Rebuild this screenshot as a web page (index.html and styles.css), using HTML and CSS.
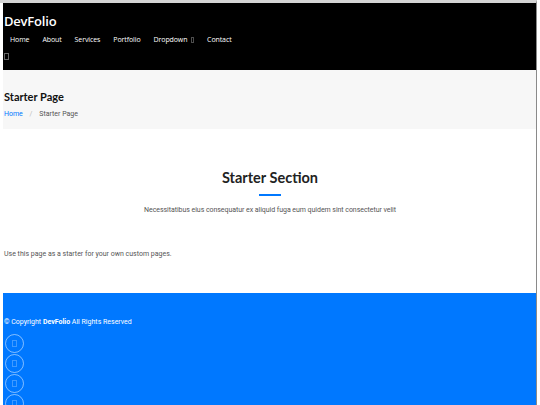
FILE: index.html
```html
<!DOCTYPE html>
<html lang="en">
<head>
	<meta charset="UTF-8">
	<title>Starter Page - DevFolio</title>
	<link rel="stylesheet" href="styles.css">
</head>
<body>
	<header class="header">
		<div class="logo">DevFolio</div>
		<nav class="navbar">
			<a href="#">Home</a>
			<a href="#">About</a>
			<a href="#">Services</a>
			<a href="#">Portfolio</a>
			<a href="#">Dropdown <span class="glyph"></span></a>
			<a href="#">Contact</a>
		</nav>
		<div class="toggle"><span class="glyph"></span></div>
	</header>

	<div class="pageTitle">
		<h1>Starter Page</h1>
		<div class="crumbs">
			<a href="#">Home</a>
			<span class="sep">/</span>
			<span>Starter Page</span>
		</div>
	</div>

	<section class="starter">
		<div class="sectionTitle">
			<h2>Starter Section</h2>
			<div class="line"></div>
			<p>Necessitatibus eius consequatur ex aliquid fuga eum quidem sint consectetur velit</p>
		</div>
		<p class="note">Use this page as a starter for your own custom pages.</p>
	</section>

	<footer class="footer">
		<p class="copy">&copy; Copyright <strong>DevFolio</strong> All Rights Reserved</p>
		<div class="social">
			<a href="#"><span class="glyph"></span></a>
			<a href="#"><span class="glyph"></span></a>
			<a href="#"><span class="glyph"></span></a>
			<a href="#"><span class="glyph"></span></a>
		</div>
	</footer>
</body>
</html>
```

FILE: styles.css
```css
html {
  background: #fff;
}
body {
  margin: 0 3px 0 0;
  border-top: 3px solid #d4d4d4;
  border-right: 1px solid #8a8a8a;
  padding-left: 3px;
  font-family: Roboto, "Liberation Sans", sans-serif;
  color: #444;
  min-height: 402px;
}
a {
  text-decoration: none;
}
.glyph {
  display: inline-block;
  width: 3px;
  height: 5px;
  border: 1px solid currentColor;
  opacity: 0.4;
  vertical-align: middle;
}

/* header */
.header {
  background: #000;
  height: 67px;
  padding: 9px 0 0 1px;
  box-sizing: border-box;
  font-family: "Open Sans", Lato, sans-serif;
}
.header .logo {
  color: #fff;
  font-size: 13px;
  font-weight: 600;
  line-height: 18px;
  letter-spacing: -0.2px;
}
.header .navbar {
  display: flex;
  gap: 13px;
  padding: 5px 0 0 6px;
}
.header .navbar a {
  color: #fff;
  font-size: 7px;
  line-height: 10px;
  letter-spacing: -0.1px;
}
.header .navbar a .glyph {
  width: 1px;
  height: 4px;
  margin-left: 2px;
  opacity: 0.3;
}
.header .toggle {
  color: #fff;
  line-height: 10px;
  padding-top: 5px;
}

/* page title */
.pageTitle {
  background: #f7f7f7;
  height: 59px;
  padding: 19px 0 0 1px;
  box-sizing: border-box;
}
.pageTitle h1 {
  margin: 0;
  font-family: Lato, "Open Sans", sans-serif;
  font-size: 11px;
  font-weight: 700;
  color: #111;
  line-height: 16px;
}
.pageTitle .crumbs {
  font-size: 7px;
  line-height: 10px;
  padding-top: 4px;
  color: #555;
}
.pageTitle .crumbs a {
  color: #0078ff;
}
.pageTitle .crumbs .sep {
  color: #bbb;
  margin: 0 5px;
}

/* starter section */
.starter {
  padding: 38px 0 0 1px;
  height: 164px;
  box-sizing: border-box;
}
.sectionTitle {
  text-align: center;
}
.sectionTitle h2 {
  margin: 0;
  font-family: Lato, "Open Sans", sans-serif;
  font-size: 14.5px;
  font-weight: 700;
  color: #222;
  line-height: 22px;
}
.sectionTitle .line {
  width: 22px;
  height: 2px;
  background: #0078ff;
  margin: 5px auto 0;
}
.sectionTitle p {
  margin: 0;
  padding-top: 9px;
  font-size: 7px;
  line-height: 10px;
  color: #555;
  letter-spacing: -0.05px;
}
.starter .note {
  margin: 34px 0 0;
  font-size: 7px;
  line-height: 10px;
  color: #555;
}

/* footer */
.footer {
  background: #0078ff;
  color: #fff;
  padding: 24px 0 0 1px;
  height: 112px;
  box-sizing: border-box;
  overflow: hidden;
}
.footer .copy {
  margin: 0;
  font-size: 7px;
  line-height: 10px;
}
.footer .social {
  display: flex;
  flex-direction: column;
  gap: 1px;
  padding: 7px 0 0 1px;
}
.footer .social a {
  display: flex;
  align-items: center;
  justify-content: center;
  width: 17px;
  height: 17px;
  border: 1px solid rgba(255, 255, 255, 0.5);
  border-radius: 50%;
  color: #fff;
}
.footer .social .glyph {
  opacity: 0.25;
}
```
